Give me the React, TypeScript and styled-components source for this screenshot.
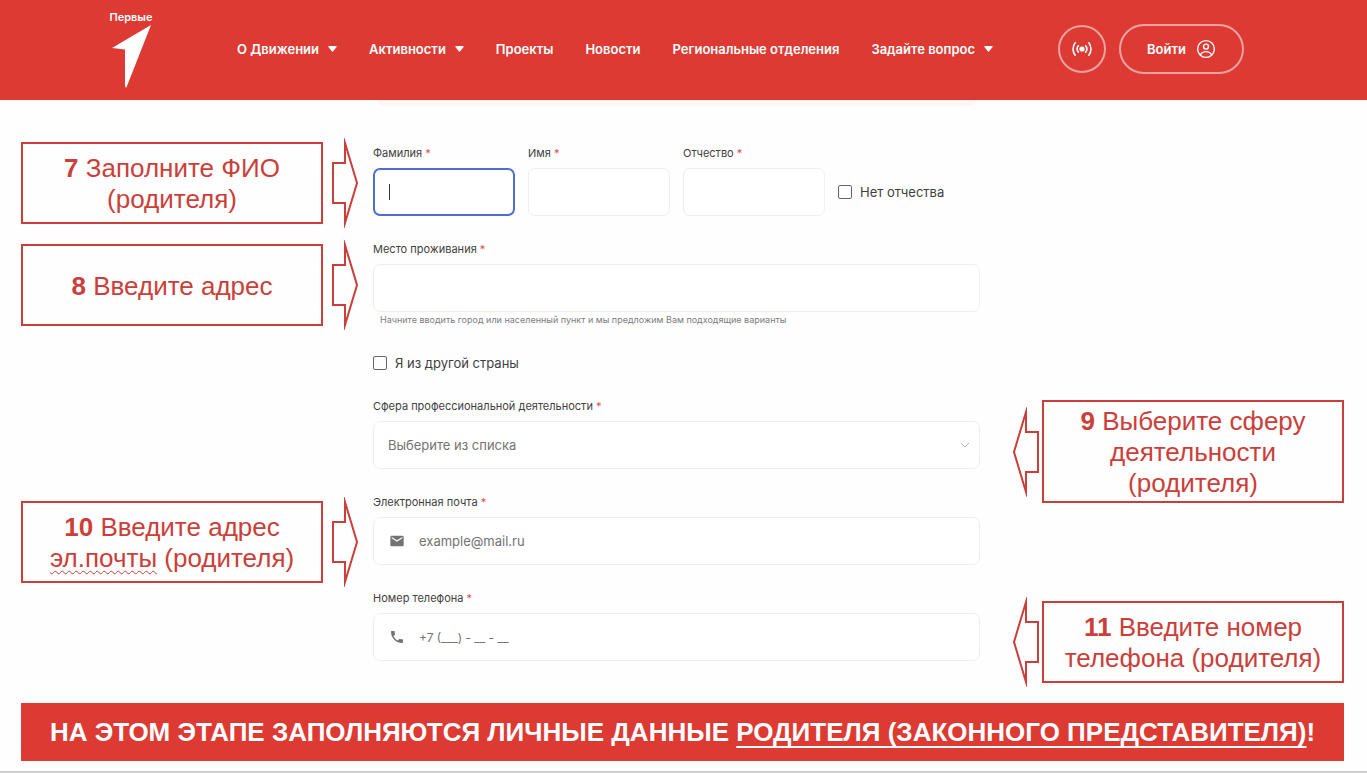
import React from "react";
import styled, { createGlobalStyle, css } from "styled-components";
import { MdEmail, MdPhone } from "react-icons/md";

const RED = "#dd3a34";
const OUTLINE = "#cb3f3a";
const INK = "#3f3f3f";
const MUTED = "#737373";
const SITE_FONT = `Inter, "Open Sans", sans-serif`;
const NOTE_FONT = `"Liberation Sans", Arial, sans-serif`;

const GlobalStyle = createGlobalStyle`
  *, *::before, *::after { box-sizing: border-box; }
  body { margin: 0; background: #fefefe; color: ${INK}; font-family: ${SITE_FONT}; }
  button, input, select { font: inherit; color: inherit; }
`;

const Page = styled.div`
  border-bottom: 2px solid #cfcfcf;
`;

const Header = styled.header`
  display: flex;
  align-items: center;
  height: 100px;
  padding: 0 123px 3px 110px;
  background: ${RED};
  color: #fff;
`;

const Logo = styled.a`
  display: flex;
  flex-direction: column;
  align-items: center;
  width: 42px;
  margin-right: 85px;
  color: #fff;
  font-size: 11px;
  font-weight: 600;
  line-height: 14px;
  text-decoration: none;
`;

const Nav = styled.nav`
  display: flex;
  gap: 32px;
`;

const NavLink = styled.a`
  display: flex;
  align-items: center;
  gap: 9px;
  color: #fff;
  font-size: 13px;
  font-weight: 600;
  line-height: 16px;
  white-space: nowrap;
  text-decoration: none;
`;

const Actions = styled.div`
  display: flex;
  align-items: center;
  gap: 13px;
  margin-left: auto;
`;

const PillButton = styled.button<{ $round?: boolean }>`
  display: flex;
  align-items: center;
  justify-content: center;
  gap: 10px;
  width: ${(p) => (p.$round ? 48 : 125)}px;
  height: ${(p) => (p.$round ? 48 : 50)}px;
  padding: 0;
  border: 2px solid #f2a39f;
  border-radius: 25px;
  background: transparent;
  color: #fff;
  font-size: 13px;
  font-weight: 600;
`;

const Columns = styled.main`
  display: grid;
  grid-template-columns: 337px minmax(0, 1fr) 331px;
  align-items: start;
  padding: 0 23px 0 21px;
`;

const NotesColumn = styled.aside`
  padding-top: 38px;
`;

const NoteRow = styled.div<{ $space?: number }>`
  display: flex;
  align-items: center;
  justify-content: space-between;
  margin-top: ${(p) => p.$space ?? 0}px;
`;

const NoteBox = styled.p<{ $lines: number }>`
  display: flex;
  align-items: center;
  justify-content: center;
  width: 302px;
  min-height: ${(p) => (p.$lines > 2 ? 103 : 82)}px;
  margin: 0;
  padding-top: 2px;
  border: 2px solid ${OUTLINE};
  color: ${OUTLINE};
  font-family: ${NOTE_FONT};
  font-size: 26px;
  line-height: 31px;
  text-align: center;
`;

const Misspelled = styled.span`
  text-decoration: underline wavy 1px;
  text-underline-offset: 3px;
`;

const Form = styled.form`
  display: flex;
  flex-direction: column;
  gap: 25px;
  margin: 0 33px 0 15px;
`;

const PreviousPanel = styled.div`
  height: 6px;
  margin: 0 4px 14px;
  border-radius: 0 0 6px 6px;
  background: #fff5f5;
`;

const NameRow = styled.div`
  display: grid;
  grid-template-columns: repeat(3, minmax(0, 1fr)) 142px;
  column-gap: 13px;
  align-items: end;
`;

const FieldGroup = styled.div`
  display: flex;
  flex-direction: column;
`;

const Label = styled.label`
  margin-bottom: 7px;
  font-size: 11px;
  line-height: 16px;
  white-space: nowrap;
`;

const Star = styled.span`
  color: #d9534f;
`;

const Control = styled.div<{ $active?: boolean }>`
  display: flex;
  align-items: center;
  height: 48px;
  padding: 0 9px 0 14px;
  border: 1px solid #efefef;
  border-radius: 7px;
  background: #fff;
  color: ${MUTED};
  ${(p) =>
    p.$active &&
    css`
      border: 2px solid #4f6fcf;
    `}
  & > svg {
    flex: none;
  }
`;

const LeadIcon = styled.span`
  display: flex;
  width: 31px;
  padding-left: 1px;
`;

const bare = css`
  flex: 1;
  min-width: 0;
  height: 100%;
  padding: 0;
  border: 0;
  outline: 0;
  background: transparent;
  font-size: 13px;
`;

const TextInput = styled.input`
  ${bare}
  &::placeholder {
    color: ${MUTED};
    opacity: 1;
  }
  &[type="tel"] {
    font-size: 12px;
  }
`;

const Select = styled.select`
  ${bare}
  appearance: none;
`;

const Caret = styled.span`
  width: 1px;
  height: 16px;
  background: #333;
`;

const Hint = styled.small`
  padding-left: 7px;
  color: #7d7d7d;
  font-size: 9px;
  line-height: 15px;
`;

const CheckLabel = styled.label<{ $tall?: boolean }>`
  display: flex;
  align-items: center;
  gap: 8px;
  height: ${(p) => (p.$tall ? 48 : 21)}px;
  font-size: 13px;
  white-space: nowrap;
`;

const CheckBox = styled.input`
  appearance: none;
  width: 14px;
  height: 14px;
  margin: 0;
  border: 1px solid #666;
  border-radius: 2px;
`;

const Banner = styled.p`
  margin: 16px 23px 10px 21px;
  background: ${RED};
  color: #fff;
  font-family: ${NOTE_FONT};
  font-size: 26px;
  font-weight: 700;
  line-height: 58px;
  text-align: center;
`;

const Underlined = styled.span`
  text-decoration: underline 2px;
  text-underline-offset: 5px;
`;

function DownTriangle() {
  return (
    <svg width="9" height="6" viewBox="0 0 9 6" aria-hidden="true">
      <path d="M1 0h7q1 0 .6.9L5.2 5.3q-.7.8-1.4 0L.4.9Q0 0 1 0z" fill="#fff" />
    </svg>
  );
}

function Broadcast() {
  return (
    <svg
      width="22"
      height="16"
      viewBox="0 0 22 16"
      fill="none"
      stroke="#fff"
      strokeWidth="1.6"
      strokeLinecap="round"
      aria-hidden="true"
    >
      <circle cx="11" cy="8" r="2.6" fill="#fff" stroke="none" />
      <path d="M7.400 4.800a5 5 0 0 0 0 6.400M14.600 4.800a5 5 0 0 1 0 6.400" />
      <path d="M4.200 1.800a10 10 0 0 0 0 12.400M17.800 1.800a10 10 0 0 1 0 12.400" />
    </svg>
  );
}

function UserCircle() {
  return (
    <svg width="20" height="20" viewBox="0 0 20 20" fill="none" stroke="#fff" strokeWidth="1.4" aria-hidden="true">
      <circle cx="10" cy="10" r="8.4" />
      <circle cx="10" cy="7.6" r="2.5" />
      <path d="M4.4 15.8C5.6 13.6 7.6 12.6 10 12.6s4.400 1 5.600 3.200" />
    </svg>
  );
}

function BlockArrow({ left }: { left?: boolean }) {
  return (
    <svg width="27" height="90" viewBox="0 0 27 90" fill="none" stroke={OUTLINE} strokeWidth="2" aria-hidden="true">
      <path
        d={left ? "M25 25H13V5L1 45l12 40V65h12z" : "M2 25h12V5l12 40-12 40V65H2z"}
        strokeMiterlimit="10"
      />
    </svg>
  );
}

type NoteProps = {
  number: number;
  lines?: number;
  space?: number;
  left?: boolean;
  children: React.ReactNode;
};

function Note({ number, lines = 2, space, left, children }: NoteProps) {
  return (
    <NoteRow $space={space}>
      {left && <BlockArrow left />}
      <NoteBox $lines={lines}>
        <span>
          <b>{number}</b> {children}
        </span>
      </NoteBox>
      {!left && <BlockArrow />}
    </NoteRow>
  );
}

type FieldProps = {
  id: string;
  label: string;
  active?: boolean;
  hint?: string;
  children: React.ReactNode;
};

function Field({ id, label, active, hint, children }: FieldProps) {
  return (
    <FieldGroup>
      <Label htmlFor={id}>
        {label} <Star>*</Star>
      </Label>
      <Control $active={active}>{children}</Control>
      {hint && <Hint>{hint}</Hint>}
    </FieldGroup>
  );
}

const NAV = [
  { text: "О Движении", menu: true },
  { text: "Активности", menu: true },
  { text: "Проекты" },
  { text: "Новости" },
  { text: "Региональные отделения" },
  { text: "Задайте вопрос", menu: true },
];

export default function App() {
  return (
    <Page>
      <GlobalStyle />
      <Header>
        <Logo href="#">
          Первые
          <svg width="42" height="64" viewBox="0 0 42 64" aria-hidden="true">
            <path d="M41 1 2 24q7 .5 13 1.500V62q1 3 2 0z" fill="#fff" />
          </svg>
        </Logo>
        <Nav>
          {NAV.map((item) => (
            <NavLink href="#" key={item.text}>
              {item.text}
              {item.menu && <DownTriangle />}
            </NavLink>
          ))}
        </Nav>
        <Actions>
          <PillButton $round type="button" aria-label="Эфир">
            <Broadcast />
          </PillButton>
          <PillButton type="button">
            Войти <UserCircle />
          </PillButton>
        </Actions>
      </Header>

      <Columns>
        <NotesColumn>
          <Note number={7}>
            Заполните ФИО
            <br />
            (родителя)
          </Note>
          <Note number={8} space={12}>
            Введите адрес
          </Note>
          <Note number={10} space={167}>
            Введите адрес
            <br />
            <Misspelled>эл.почты</Misspelled> (родителя)
          </Note>
        </NotesColumn>

        <Form>
          <PreviousPanel />
          <NameRow>
            <Field id="surname" label="Фамилия" active>
              <Caret />
              <TextInput id="surname" />
            </Field>
            <Field id="name" label="Имя">
              <TextInput id="name" />
            </Field>
            <Field id="patronymic" label="Отчество">
              <TextInput id="patronymic" />
            </Field>
            <CheckLabel $tall>
              <CheckBox type="checkbox" /> Нет отчества
            </CheckLabel>
          </NameRow>
          <Field
            id="place"
            label="Место проживания"
            hint="Начните вводить город или населенный пункт и мы предложим Вам подходящие варианты"
          >
            <TextInput id="place" />
          </Field>
          <CheckLabel>
            <CheckBox type="checkbox" /> Я из другой страны
          </CheckLabel>
          <Field id="sphere" label="Сфера профессиональной деятельности">
            <Select id="sphere">
              <option>Выберите из списка</option>
            </Select>
            <svg width="10" height="6" viewBox="0 0 10 6" fill="none" stroke="#b5b5b5" aria-hidden="true">
              <path d="m1 1 4 4 4-4" />
            </svg>
          </Field>
          <Field id="email" label="Электронная почта">
            <LeadIcon>
              <MdEmail size={16} />
            </LeadIcon>
            <TextInput id="email" type="email" placeholder="example@mail.ru" />
          </Field>
          <Field id="phone" label="Номер телефона">
            <LeadIcon>
              <MdPhone size={16} />
            </LeadIcon>
            <TextInput id="phone" type="tel" placeholder="+7 (___) - __ - __" />
          </Field>
        </Form>

        <NotesColumn>
          <Note number={9} lines={3} space={262} left>
            Выберите сферу
            <br />
            деятельности
            <br />
            (родителя)
          </Note>
          <Note number={11} space={94} left>
            Введите номер
            <br />
            телефона (родителя)
          </Note>
        </NotesColumn>
      </Columns>

      <Banner>
        НА ЭТОМ ЭТАПЕ ЗАПОЛНЯЮТСЯ ЛИЧНЫЕ ДАННЫЕ <Underlined>РОДИТЕЛЯ (ЗАКОННОГО ПРЕДСТАВИТЕЛЯ)</Underlined>!
      </Banner>
    </Page>
  );
}
